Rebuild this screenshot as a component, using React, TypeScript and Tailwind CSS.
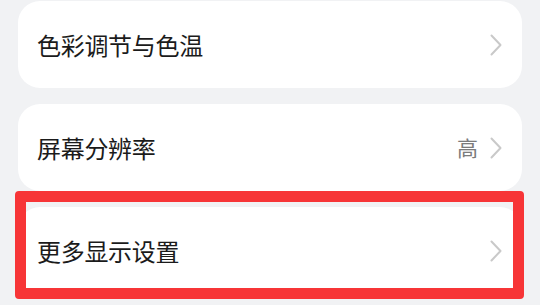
import React from 'react';

function Chevron() {
  return (
    <svg width="12" height="22" viewBox="0 0 12 22" className="shrink-0">
      <path d="M1.5 1.5 L10.5 11 L1.5 20.5" fill="none" stroke="#c9c9c9" strokeWidth="2" strokeLinecap="round" strokeLinejoin="round" />
    </svg>
  );
}

interface RowProps {
  title: string;
  value?: string;
}

function Row({ title, value }: RowProps) {
  return (
    <div className="h-[87px] rounded-[22px] bg-white flex items-center justify-between pl-[19px] pr-[20px]">
      <span className="text-[24px] leading-none text-[#1b1b1b] tracking-[-0.3px]">{title}</span>
      <div className="flex items-center gap-[12px]">
        {value && <span className="text-[21px] leading-none text-[#7b7b7b]">{value}</span>}
        <Chevron />
      </div>
    </div>
  );
}

export default function App() {
  return (
    <div
      className="relative w-[540px] h-[305px] overflow-hidden bg-[#f1f2f4]"
      style={{ fontFamily: '"Noto Sans CJK SC", "Noto Sans", sans-serif' }}
    >
      <div className="flex flex-col gap-[16px] px-[18px] pt-[1px]">
        <Row title="色彩调节与色温" />
        <Row title="屏幕分辨率" value="高" />
        <Row title="更多显示设置" />
      </div>
      <div className="absolute left-[15px] top-[191px] w-[509px] h-[108px] border-[11px] border-[#f73537] rounded-[4px]" />
    </div>
  );
}
